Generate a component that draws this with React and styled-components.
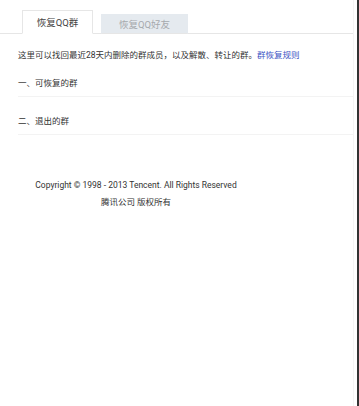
import React, { useState } from 'react';
import styled, { createGlobalStyle } from 'styled-components';

const GlobalStyle = createGlobalStyle`
  html, body {
    margin: 0;
    padding: 0;
    background: #fff;
  }
  body {
    font-family: Roboto, "Noto Sans CJK SC", "Noto Sans", sans-serif;
    color: #333;
  }
`;

const Page = styled.div`
  display: flex;
  width: 359px;
  height: 406px;
  overflow: hidden;
`;

const Main = styled.div`
  flex: 1;
  display: flex;
  flex-direction: column;
  border-right: 1px solid #f4f4f4;
  margin-right: 3px;
`;

const EdgeBar = styled.div`
  width: 2px;
  background: #333;
`;

const TabBar = styled.div`
  display: flex;
  align-items: flex-end;
  gap: 8px;
  height: 33px;
  padding-left: 22px;
  border-bottom: 1px solid #e6e6e6;
`;

const Tab = styled.div`
  box-sizing: border-box;
  width: ${p => (p.$active ? '71px' : '87px')};
  height: ${p => (p.$active ? '24px' : '20px')};
  margin-bottom: -1px;
  display: flex;
  align-items: center;
  justify-content: center;
  font-size: 9.5px;
  cursor: pointer;
  color: ${p => (p.$active ? '#444' : '#a5a9ad')};
  background: ${p => (p.$active ? '#fff' : '#e5eaef')};
  border: 1px solid ${p => (p.$active ? '#e6e6e6' : '#e5eaef')};
  border-bottom-color: ${p => (p.$active ? '#fff' : '#e6e6e6')};
`;

const Intro = styled.p`
  margin: 15px 0 0 18px;
  font-size: 8.5px;
  line-height: 13px;
  color: #333;
`;

const RuleLink = styled.a`
  color: #3d55c4;
  text-decoration: none;
`;

const Section = styled.div`
  margin-left: 18px;
  padding-top: ${p => p.$top}px;
  padding-bottom: 6px;
  border-bottom: 1px solid #f3f3f3;
  font-size: 8.5px;
  line-height: 13px;
  color: #333;
`;

const Footer = styled.div`
  width: 272px;
  margin-top: 44px;
  display: flex;
  flex-direction: column;
  align-items: center;
  gap: 4px;
  font-size: 8.5px;
  line-height: 13px;
  color: #333;
`;

export default function App() {
  const [tab, setTab] = useState(0);
  return (
    <>
      <GlobalStyle />
      <Page>
        <Main>
          <TabBar>
            <Tab $active={tab === 0} onClick={() => setTab(0)}>恢复QQ群</Tab>
            <Tab $active={tab === 1} onClick={() => setTab(1)}>恢复QQ好友</Tab>
          </TabBar>
          <Intro>
            这里可以找回最近28天内删除的群成员，以及解散、转让的群。
            <RuleLink href="#">群恢复规则</RuleLink>
          </Intro>
          <Section $top={15}>一、可恢复的群</Section>
          <Section $top={18}>二、退出的群</Section>
          <Footer>
            <span>Copyright © 1998 - 2013 Tencent. All Rights Reserved</span>
            <span>腾讯公司 版权所有</span>
          </Footer>
        </Main>
        <EdgeBar />
      </Page>
    </>
  );
}
